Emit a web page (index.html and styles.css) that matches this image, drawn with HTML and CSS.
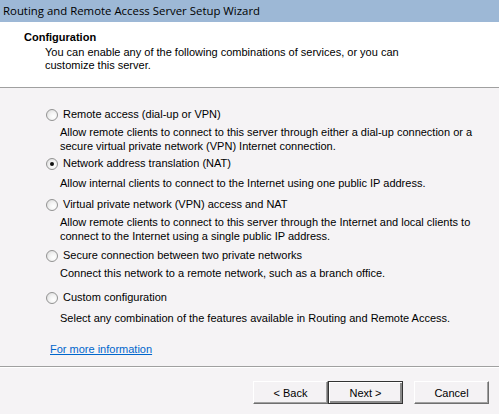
FILE: index.html
```html
<!DOCTYPE html>
<html lang="en">
<head>
    <meta charset="UTF-8">
    <title>Routing and Remote Access Server Setup Wizard</title>
    <link rel="stylesheet" href="styles.css">
</head>
<body>
    <div class="wizard">
        <div class="titlebar">Routing and Remote Access Server Setup Wizard</div>

        <div class="header">
            <h2>Configuration</h2>
            <p>You can enable any of the following combinations of services, or you can<br>customize this server.</p>
        </div>

        <div class="content">
            <div class="option opt1">
                <label><span class="radio"></span>Remote access (dial-up or VPN)</label>
                <p>Allow remote clients to connect to this server through either a dial-up connection or a<br>secure virtual private network (VPN) Internet connection.</p>
            </div>
            <div class="option opt2">
                <label><span class="radio checked"></span>Network address translation (NAT)</label>
                <p>Allow internal clients to connect to the Internet using one public IP address.</p>
            </div>
            <div class="option opt3">
                <label><span class="radio"></span>Virtual private network (VPN) access and NAT</label>
                <p>Allow remote clients to connect to this server through the Internet and local clients to<br>connect to the Internet using a single public IP address.</p>
            </div>
            <div class="option opt4">
                <label><span class="radio"></span>Secure connection between two private networks</label>
                <p>Connect this network to a remote network, such as a branch office.</p>
            </div>
            <div class="option opt5">
                <label><span class="radio"></span>Custom configuration</label>
                <p>Select any combination of the features available in Routing and Remote Access.</p>
            </div>

            <a class="more" href="#">For more information</a>
        </div>

        <div class="footer">
            <button class="btn">&lt; Back</button><button class="btn default">Next &gt;</button>
            <button class="btn cancel">Cancel</button>
        </div>
    </div>
</body>
</html>
```
FILE: styles.css
```css
*{
    margin: 0;
    padding: 0;
    box-sizing: border-box;
}
body{
    width: 499px;
    height: 414px;
    background-color: #f5f3f5;
    font-family: "Liberation Sans", Arial, sans-serif;
    font-size: 11px;
    color: #000;
    overflow: hidden;
}
.titlebar{
    height: 22px;
    line-height: 22px;
    padding-left: 3px;
    background-color: #9db8d6;
    font-family: "Open Sans", "Liberation Sans", sans-serif;
    font-size: 11.4px;
}
.header{
    height: 66px;
    background-color: #fff;
    padding: 9px 0 0 24px;
    border-bottom: 1px solid #a0a0a0;
}
.header h2{
    font-size: 11px;
    line-height: 13px;
    font-weight: bold;
}
.header p{
    margin: 2px 0 0 21px;
    line-height: 13px;
}
.content{
    height: 279px;
    padding: 20px 0 0 46px;
    border-bottom: 1px solid #a0a0a0;
}
.option label{
    display: flex;
    align-items: center;
    height: 13px;
    line-height: 13px;
}
.option p{
    margin-left: 14px;
    line-height: 14px;
}
.opt1 p{ margin-top: 4px; }
.opt2{ margin-top: 4px; }
.opt2 p{ margin-top: 6px; }
.opt3{ margin-top: 8px; }
.opt3 p{ margin-top: 4px; }
.opt4{ margin-top: 6px; }
.opt4 p{ margin-top: 4px; }
.opt5{ margin-top: 11px; }
.opt5 p{ margin-top: 7px; }
.radio{
    width: 12px;
    height: 12px;
    margin-right: 5px;
    border-radius: 50%;
    border: 1px solid #939393;
    background: radial-gradient(circle at 65% 65%, #fff 0, #f4f4f4 40%, #d6d6d6 100%);
    position: relative;
}
.radio.checked::after{
    content: "";
    position: absolute;
    left: 3px;
    top: 3px;
    width: 4px;
    height: 4px;
    border-radius: 50%;
    background-color: #111;
}
.more{
    display: inline-block;
    margin: 18px 0 0 4px;
    color: #0066cc;
    text-decoration: underline;
}
.footer{
    border-top: 1px solid #fff;
    padding: 13px 10px 0 0;
    display: flex;
    justify-content: flex-end;
}
.btn{
    width: 75px;
    height: 23px;
    font-family: "Liberation Sans", Arial, sans-serif;
    font-size: 11px;
    background-color: #f4f2f4;
    border: 1px solid;
    border-color: #fff #6f6f6f #6f6f6f #fff;
    box-shadow: inset -1px -1px 0 #a0a0a0;
}
.btn.default{
    border: 1px solid #333;
    box-shadow: inset 1px 1px 0 #fff, inset -2px -2px 0 #8a8a8a;
}
.btn.cancel{
    margin-left: 11px;
}
```
